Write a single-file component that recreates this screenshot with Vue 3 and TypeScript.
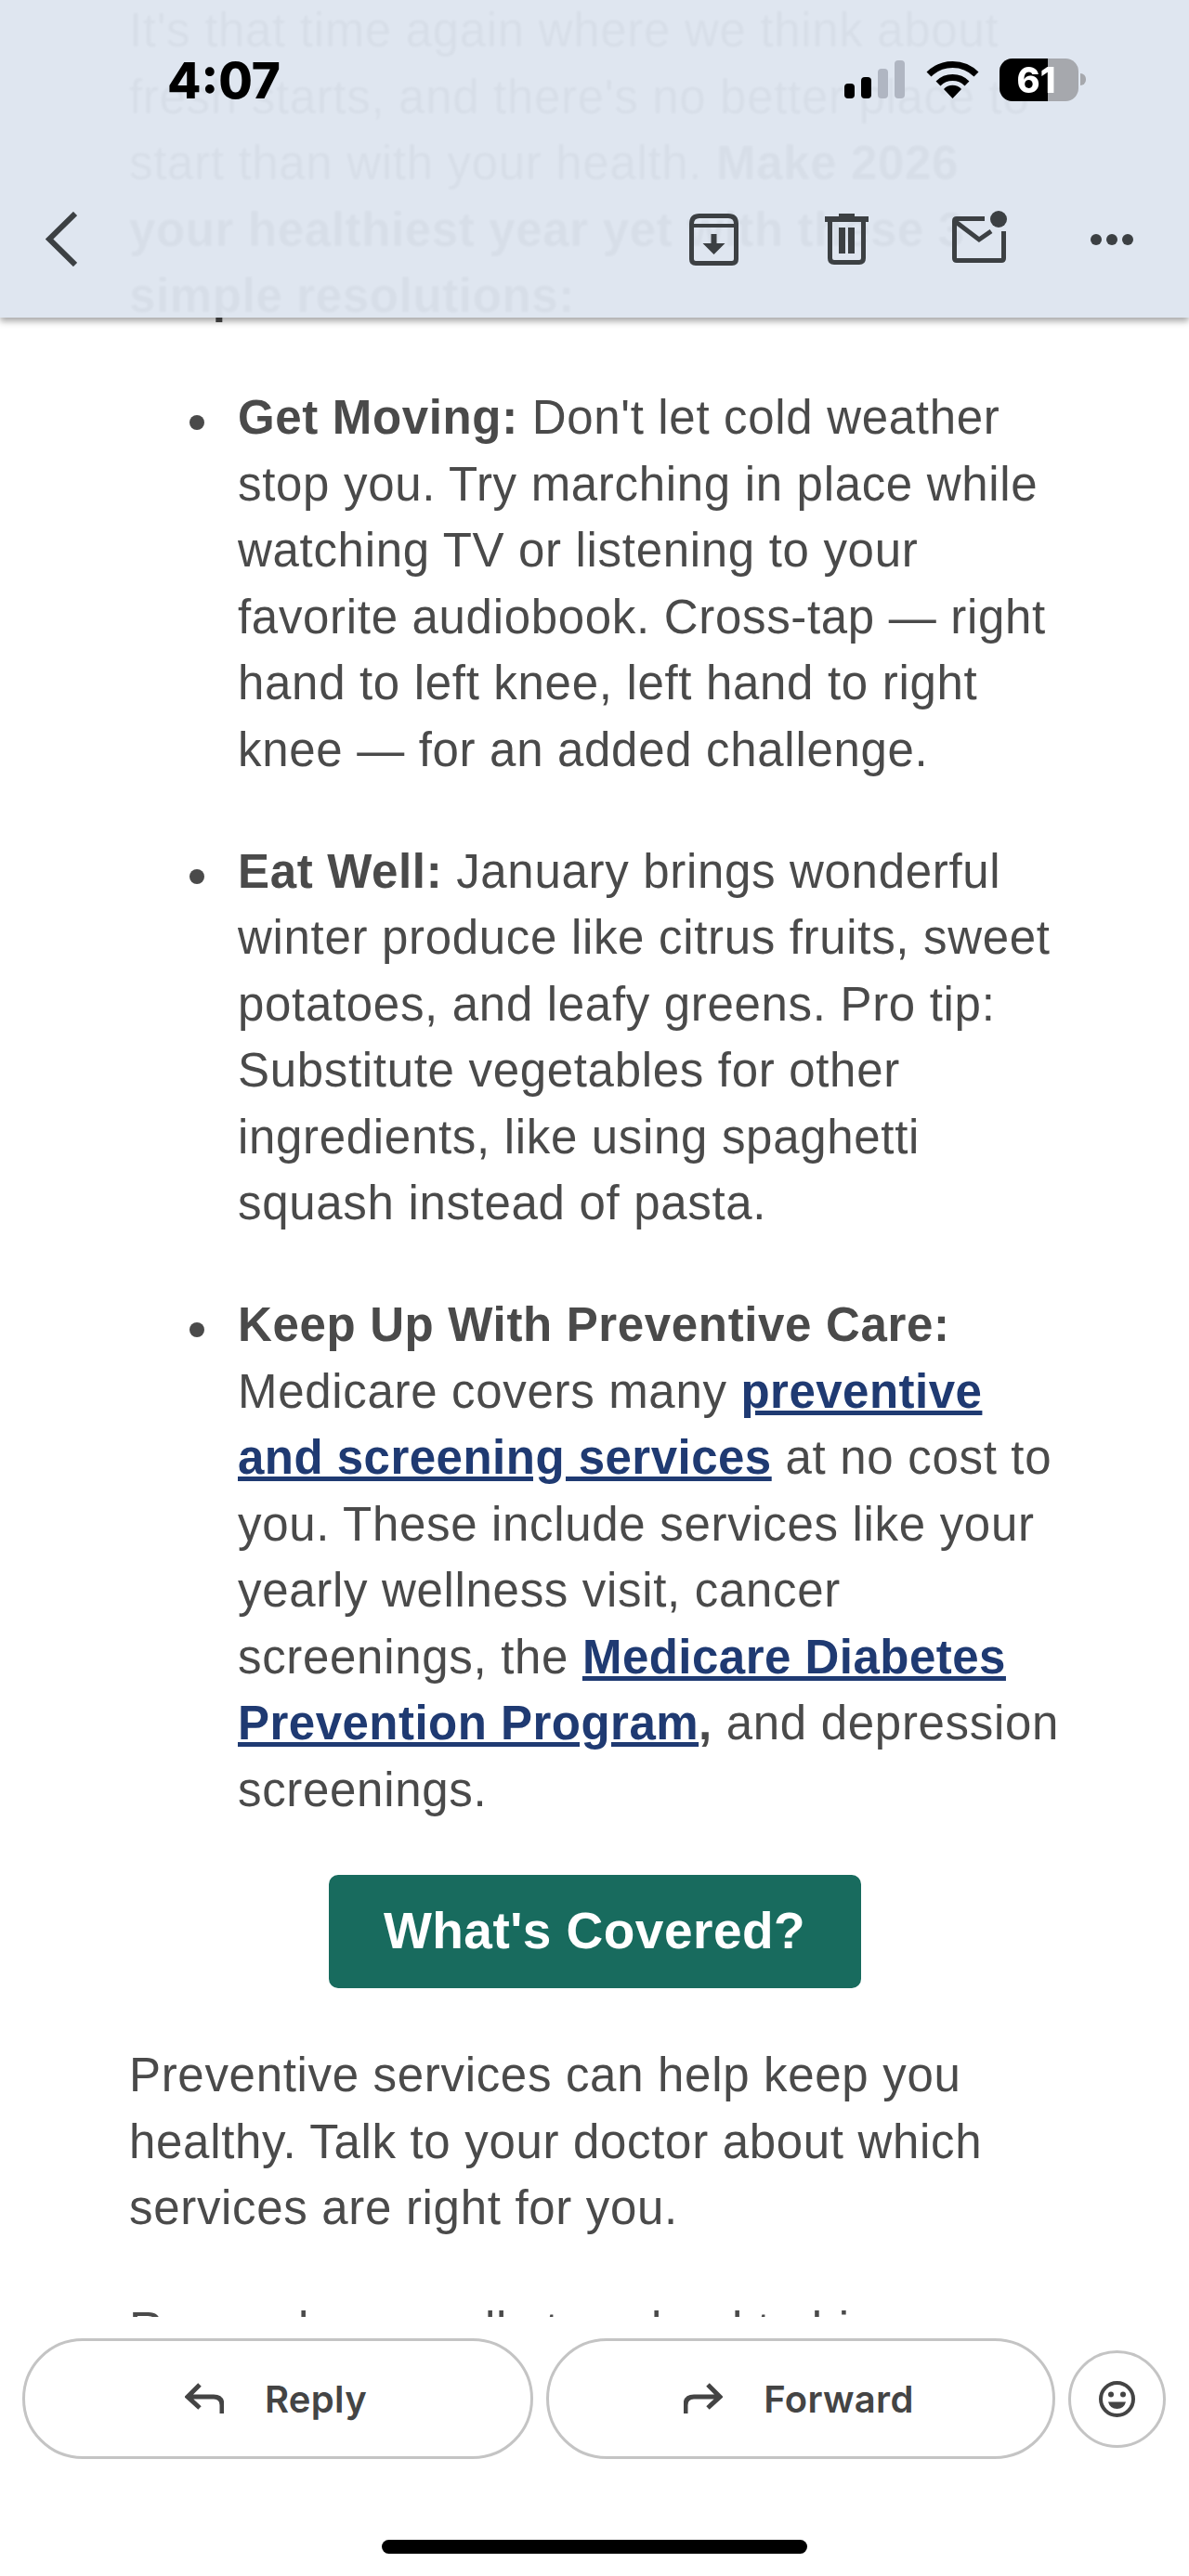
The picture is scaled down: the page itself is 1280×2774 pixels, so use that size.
<template>
    <div class="screen">
        <div class="article">
            <p class="para">
                It's that time again where we think about fresh starts, and there's no better place to
                start than with your health. <b>Make 2026 your healthiest year yet with these 3 simple resolutions:</b>
            </p>
            <ul class="tips">
                <li><b>Get Moving:</b> Don't let cold weather stop you. Try marching in place while watching TV or listening to your favorite audiobook. Cross-tap — right hand to left knee, left hand to right knee — for an added challenge.</li>
                <li><b>Eat Well:</b> January brings wonderful winter produce like citrus fruits, sweet potatoes, and leafy greens. Pro tip: Substitute vegetables for other ingredients, like using spaghetti squash instead of pasta.</li>
                <li><b>Keep Up With Preventive Care:</b> Medicare covers many <a href="#">preventive and screening services</a> at no cost to you. These include services like your yearly wellness visit, cancer screenings, the <a href="#">Medicare Diabetes Prevention Program</a><b>,</b> and depression screenings.</li>
            </ul>
            <div class="cta-wrap">
                <a class="cta" href="#">What's Covered?</a>
            </div>
            <p class="para">Preventive services can help keep you healthy. Talk to your doctor about which services are right for you.</p>
            <p class="para">Remember, small steps lead to big changes.</p>
        </div>

        <div class="top-bar">
            <div class="status">
                <span class="time">4:07</span>
                <div class="signal">
                    <i v-for="bar in signalBars" :key="bar.height" :class="{off: bar.off}" :style="{height: bar.height + 'px'}"></i>
                </div>
                <svg class="wifi" width="57" height="42" viewBox="0 0 57 42">
                    <path d="M3 16A36 36 0 0 1 54 16" fill="none" stroke="#000" stroke-width="7"/>
                    <path d="M13 26A22 22 0 0 1 44 26" fill="none" stroke="#000" stroke-width="7"/>
                    <path d="M28.5 42L19 32A13 13 0 0 1 38 32Z" fill="#000"/>
                </svg>
                <div class="battery">
                    <div class="battery-fill"></div>
                    <span class="battery-text">61</span>
                </div>
                <div class="battery-nub"></div>
            </div>
            <div class="toolbar">
                <svg class="back" width="34" height="59" viewBox="0 0 34 59">
                    <path d="M32 2L4 29.500L32 57" fill="none" stroke="#3c4043" stroke-width="6"/>
                </svg>
                <svg class="archive" width="53" height="56" viewBox="0 0 53 56">
                    <path d="M2.500 11Q2.500 2.500 11 2.500H42Q50.500 2.500 50.500 11V49Q50.500 53.500 46 53.500H7Q2.500 53.500 2.500 49Z" fill="none" stroke="#3c4043" stroke-width="5"/>
                    <path d="M3 13H50" stroke="#3c4043" stroke-width="4"/>
                    <path d="M23.500 22H29.500V32H38.500L26.500 44L14.500 32H23.500Z" fill="#3c4043"/>
                </svg>
                <svg class="trash" width="47" height="55" viewBox="0 0 47 55">
                    <path d="M15 0H32V3H47V9H0V3H15Z" fill="#3c4043"/>
                    <path d="M5.500 8V48Q5.500 52.500 10 52.500H37Q41.500 52.500 41.500 48V8" fill="none" stroke="#3c4043" stroke-width="5"/>
                    <path d="M15 15H22V43H15ZM25 15H32V43H25Z" fill="#3c4043"/>
                </svg>
                <svg class="mail" width="59" height="56" viewBox="0 0 59 56">
                    <path d="M35 8.500H5Q2.500 8.500 2.500 11V51Q2.500 53.500 5 53.500H53Q55.500 53.500 55.500 51V22" fill="none" stroke="#3c4043" stroke-width="5"/>
                    <path d="M4 12L29 31L42 22" fill="none" stroke="#3c4043" stroke-width="5"/>
                    <circle cx="50" cy="9" r="9" fill="#3c4043"/>
                </svg>
                <div class="more"><i></i><i></i><i></i></div>
            </div>
        </div>

        <div class="bottom-bar">
            <div class="actions">
                <button class="pill reply">
                    <svg width="42" height="34" viewBox="0 0 42 34">
                        <path d="M16 2L3 15L16 27M3 15H31Q40 15 40 24V33" fill="none" stroke="#444" stroke-width="5"/>
                    </svg>
                    Reply
                </button>
                <button class="pill forward">
                    <svg width="42" height="34" viewBox="0 0 42 34">
                        <path d="M26 2L39 15L26 27M39 15H11Q2 15 2 24V33" fill="none" stroke="#444" stroke-width="5"/>
                    </svg>
                    Forward
                </button>
                <button class="smile">
                    <svg width="39" height="39" viewBox="0 0 39 39">
                        <circle cx="19.500" cy="19.500" r="17.500" fill="none" stroke="#444" stroke-width="4"/>
                        <circle cx="13" cy="14.500" r="3" fill="#444"/>
                        <circle cx="26" cy="14.500" r="3" fill="#444"/>
                        <path d="M10 22.500H29Q27 30 19.500 30Q12 30 10 22.500Z" fill="#444"/>
                    </svg>
                </button>
            </div>
            <div class="home-indicator"></div>
        </div>
    </div>
</template>

<script setup lang="ts">
interface SignalBar {
    height: number,
    off?: boolean,
}

const signalBars: SignalBar[] = [
    {height: 16},
    {height: 23},
    {height: 32, off: true},
    {height: 41, off: true},
]
</script>

<style>
body {
    background: #fff;
}
</style>

<style scoped>
.screen {
    position: relative;
    width: 1280px;
    height: 2774px;
    overflow: hidden;
    background: #fff;
    font-family: "Liberation Sans", Arial, sans-serif;
}

.article {
    padding: 0 139px;
    margin-top: -3px;
    font-size: 51px;
    line-height: 71.5px;
    letter-spacing: 0.68px;
    color: #4a4a4a;
}
.article b {
    letter-spacing: 0.65px;
}
.article a {
    letter-spacing: 0.48px;
}
.para {
    margin: 0 0 59.5px;
}
.tips {
    margin: 0 -8px 0 0;
    padding: 0 0 0 117px;
    list-style: none;
}
.tips li {
    position: relative;
    margin-bottom: 59.5px;
}
.tips li:last-child {
    margin-bottom: 56px;
}
.tips li::before {
    content: "";
    position: absolute;
    left: -52px;
    top: 33px;
    width: 16px;
    height: 16px;
    border-radius: 50%;
    background: #4a4a4a;
}
.tips a {
    color: #1f3a72;
    font-weight: bold;
}

.cta-wrap {
    display: flex;
    justify-content: center;
    margin-bottom: 58px;
}
.cta {
    width: 573px;
    height: 122px;
    display: flex;
    align-items: center;
    justify-content: center;
    border-radius: 10px;
    background: #186b5e;
    color: #fff;
    font-size: 55px;
    font-weight: bold;
    letter-spacing: 0.4px;
    text-decoration: none;
}

.top-bar {
    position: absolute;
    top: 0;
    left: 0;
    right: 0;
    height: 342px;
    background: rgba(222, 229, 239, 0.955);
    backdrop-filter: blur(1px);
    box-shadow: 0 4px 7px rgba(0, 0, 0, 0.35);
}
.status {
    display: flex;
    align-items: flex-end;
    height: 109px;
    padding-left: 180px;
}
.time {
    font-family: Inter, sans-serif;
    font-size: 53px;
    font-weight: 800;
    line-height: 40px;
    color: #000;
    margin-bottom: 2px;
    width: 729px;
}
.signal {
    display: flex;
    align-items: flex-end;
    gap: 7.5px;
    margin-bottom: 3px;
}
.signal i {
    display: block;
    width: 10.5px;
    background: #000;
    border-radius: 4px;
}
.signal i.off {
    background: #b0b6c2;
}
.wifi {
    margin-left: 23px;
    margin-bottom: 3px;
}
.battery {
    position: relative;
    width: 85px;
    height: 46px;
    margin-left: 22px;
    border-radius: 14px;
    overflow: hidden;
    background: #a6a8ad;
}
.battery-fill {
    width: 52px;
    height: 100%;
    background: #000;
}
.battery-text {
    position: absolute;
    left: 19px;
    top: 0;
    line-height: 46px;
    font-family: Inter, sans-serif;
    font-size: 38px;
    font-weight: 800;
    color: #fff;
}
.battery-nub {
    width: 6px;
    height: 13px;
    margin: 0 0 17px 2px;
    border-radius: 0 6px 6px 0;
    background: #a6a8ad;
}

.toolbar {
    display: flex;
    align-items: flex-start;
    padding: 118px 60px 0 49px;
}
.back {
    margin-top: 1px;
    margin-right: auto;
}
.archive {
    margin-top: 3px;
}
.trash {
    margin: 3px 0 0 93px;
}
.mail {
    margin-left: 90px;
}
.more {
    display: flex;
    gap: 5px;
    margin: 25px 0 0 90px;
}
.more i {
    display: block;
    width: 12px;
    height: 12px;
    border-radius: 50%;
    background: #3c4043;
}

.bottom-bar {
    position: absolute;
    top: 2495px;
    left: 0;
    right: 0;
    bottom: 0;
    background: #fff;
}
.actions {
    display: flex;
    align-items: center;
    gap: 14px;
    padding: 23px 25px 0 24px;
}
.pill {
    display: flex;
    align-items: center;
    justify-content: center;
    gap: 44px;
    height: 130px;
    padding: 0 4px 0 0;
    background: #fff;
    border: 3px solid #c4c4c4;
    border-radius: 65px;
    font-family: Inter, sans-serif;
    font-size: 40px;
    font-weight: 600;
    letter-spacing: 0.3px;
    color: #444;
}
.reply {
    width: 550px;
}
.forward {
    width: 548px;
}
.smile {
    display: flex;
    align-items: center;
    justify-content: center;
    width: 105px;
    height: 105px;
    padding: 0;
    background: #fff;
    border: 3px solid #c4c4c4;
    border-radius: 50%;
}
.home-indicator {
    width: 458px;
    height: 15px;
    margin: 87px auto 0;
    border-radius: 8px;
    background: #000;
}
</style>
